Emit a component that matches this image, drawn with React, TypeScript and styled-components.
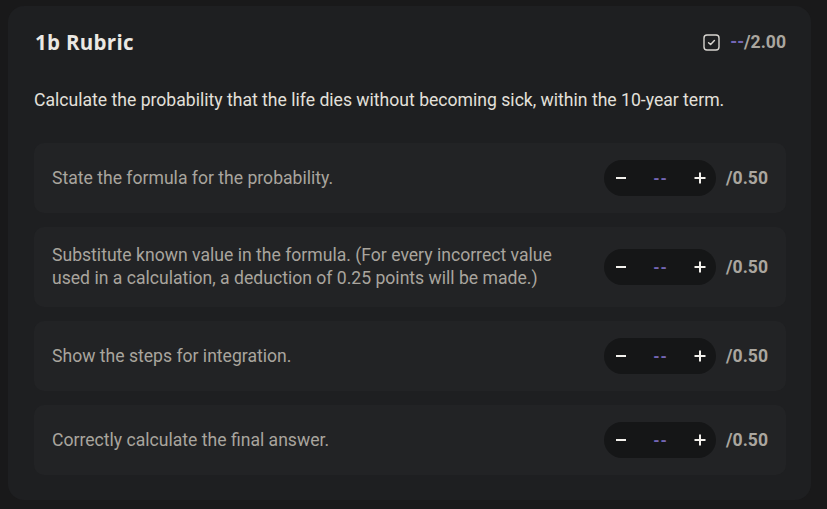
import React from "react";
import styled, { createGlobalStyle } from "styled-components";

const Global = createGlobalStyle`
  html, body { margin: 0; padding: 0; background: #19191a; }
  body { font-family: Roboto, "Noto Sans", sans-serif; -webkit-font-smoothing: antialiased; }
  * { box-sizing: border-box; }
`;

const Page = styled.div`
  width: 827px;
  height: 509px;
  padding: 6px 16px 9px 8px;
  background: #19191a;
`;

const Card = styled.section`
  width: 803px;
  height: 494px;
  background: #1e1f21;
  border-radius: 16px;
  padding: 24px 25px 25px 26px;
  display: flex;
  flex-direction: column;
`;

const Header = styled.header`
  display: flex;
  align-items: center;
  justify-content: space-between;
  height: 24px;
`;

const Title = styled.h2`
  margin: 0 0 0 1px;
  font-family: "Open Sans", Lato, sans-serif;
  font-weight: 700;
  font-size: 20.5px;
  letter-spacing: 0.3px;
  color: #ebe8e3;
`;

const Total = styled.div`
  display: flex;
  align-items: center;
  gap: 10px;
  font-size: 17.6px;
  font-weight: 700;
  color: #aaa69f;
`;

const Dash = styled.span`
  color: #7466b5;
`;

const Prompt = styled.p`
  margin: 33px 0 30px 0;
  font-size: 17.6px;
  line-height: 26px;
  color: #e3e0db;
`;

const List = styled.div`
  display: flex;
  flex-direction: column;
  gap: 14px;
`;

const Row = styled.div`
  display: flex;
  align-items: center;
  justify-content: space-between;
  gap: 24px;
  background: #222325;
  border-radius: 10px;
  padding: 17px 18px;
  min-height: 70px;
`;

const Criterion = styled.div`
  font-size: 17.6px;
  line-height: 23px;
  color: #a9a59e;
  max-width: 530px;
`;

const Controls = styled.div`
  display: flex;
  align-items: center;
  gap: 10px;
  flex-shrink: 0;
`;

const Stepper = styled.div`
  display: flex;
  align-items: center;
  justify-content: space-between;
  width: 112px;
  height: 36px;
  border-radius: 18px;
  background: #151617;
  padding: 0 10px 0 11px;
`;

const StepButton = styled.button`
  border: none;
  background: none;
  padding: 0;
  width: 12px;
  height: 20px;
  display: flex;
  align-items: center;
  justify-content: center;
  color: #f2f0ec;
  cursor: pointer;
`;

const Value = styled.span`
  font-size: 16px;
  font-weight: 700;
  color: #7466b5;
  letter-spacing: 1px;
`;

const Max = styled.span`
  font-size: 17.6px;
  font-weight: 700;
  color: #aaa69f;
`;

const CheckIcon = () => (
  <svg width="17" height="17" viewBox="0 0 17 17" fill="none">
    <rect x="1" y="1" width="15" height="15" rx="3" stroke="#d8d5d0" strokeWidth="1.4" />
    <path d="M5.6 8.7 L7.6 10.5 L11.4 6.6" stroke="#d8d5d0" strokeWidth="1.5" strokeLinecap="round" strokeLinejoin="round" />
  </svg>
);

const Minus = () => (
  <svg width="12" height="12" viewBox="0 0 12 12">
    <path d="M1 6 H11" stroke="currentColor" strokeWidth="2" />
  </svg>
);

const Plus = () => (
  <svg width="12" height="12" viewBox="0 0 12 12">
    <path d="M0.5 6 H11.5 M6 0.5 V11.5" stroke="currentColor" strokeWidth="2" />
  </svg>
);

const items = [
  "State the formula for the probability.",
  "Substitute known value in the formula. (For every incorrect value used in a calculation, a deduction of 0.25 points will be made.)",
  "Show the steps for integration.",
  "Correctly calculate the final answer.",
];

export default function App() {
  return (
    <>
      <Global />
      <Page>
        <Card>
          <Header>
            <Title>1b Rubric</Title>
            <Total>
              <CheckIcon />
              <span>
                <Dash>--</Dash>/2.00
              </span>
            </Total>
          </Header>
          <Prompt>
            Calculate the probability that the life dies without becoming sick, within the 10-year term.
          </Prompt>
          <List>
            {items.map((t) => (
              <Row key={t}>
                <Criterion>{t}</Criterion>
                <Controls>
                  <Stepper>
                    <StepButton aria-label="decrease">
                      <Minus />
                    </StepButton>
                    <Value>--</Value>
                    <StepButton aria-label="increase">
                      <Plus />
                    </StepButton>
                  </Stepper>
                  <Max>/0.50</Max>
                </Controls>
              </Row>
            ))}
          </List>
        </Card>
      </Page>
    </>
  );
}
